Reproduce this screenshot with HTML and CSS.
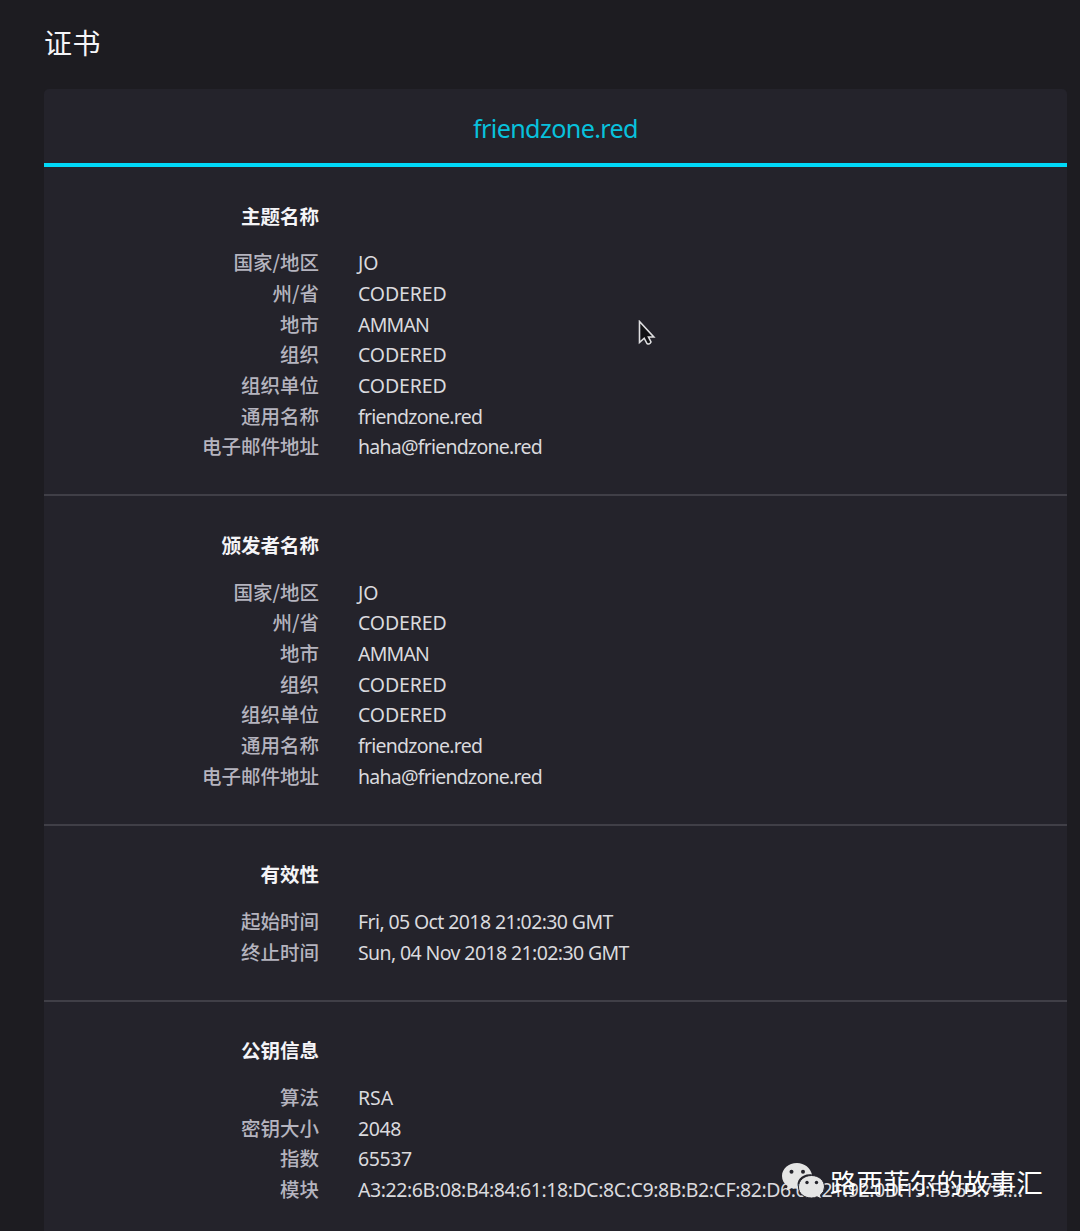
FILE: index.html
```html
<!DOCTYPE html>
<html lang="zh-CN">
<head>
<meta charset="utf-8">
<title>证书</title>
<link rel="stylesheet" href="styles.css">
</head>
<body>
<main class="page">
<h1 class="title">证书</h1>
<article class="certificate">
<div class="tab"><span>friendzone.red</span></div>
<section class="group">
<h2>主题名称</h2>
<dl>
<dt>国家/地区</dt><dd>JO</dd>
<dt>州/省</dt><dd>CODERED</dd>
<dt>地市</dt><dd class="city">AMMAN</dd>
<dt>组织</dt><dd>CODERED</dd>
<dt>组织单位</dt><dd>CODERED</dd>
<dt>通用名称</dt><dd class="lower">friendzone.red</dd>
<dt>电子邮件地址</dt><dd class="lower">haha@friendzone.red</dd>
</dl>
</section>
<section class="group">
<h2>颁发者名称</h2>
<dl>
<dt>国家/地区</dt><dd>JO</dd>
<dt>州/省</dt><dd>CODERED</dd>
<dt>地市</dt><dd class="city">AMMAN</dd>
<dt>组织</dt><dd>CODERED</dd>
<dt>组织单位</dt><dd>CODERED</dd>
<dt>通用名称</dt><dd class="lower">friendzone.red</dd>
<dt>电子邮件地址</dt><dd class="lower">haha@friendzone.red</dd>
</dl>
</section>
<section class="group">
<h2>有效性</h2>
<dl>
<dt>起始时间</dt><dd class="date">Fri, 05 Oct 2018 21:02:30 GMT</dd>
<dt>终止时间</dt><dd class="date">Sun, 04 Nov 2018 21:02:30 GMT</dd>
</dl>
</section>
<section class="group">
<h2>公钥信息</h2>
<dl>
<dt>算法</dt><dd>RSA</dd>
<dt>密钥大小</dt><dd class="number">2048</dd>
<dt>指数</dt><dd class="number">65537</dd>
<dt>模块</dt><dd class="hex">A3:22:6B:08:B4:84:61:18:DC:8C:C9:8B:B2:CF:82:D6:6E:21:92:0D:19:F3:69:79:…</dd>
</dl>
</section>
</article>
</main>
<svg class="cursor" width="18" height="27" viewBox="0 0 18 27"><path d="M1.5 1.5V22.5L6.2 18.2L9 23.5Q11.5 25 13 22L10.5 17H15.8Z" fill="#111114" stroke="#dedee0" stroke-width="1.6"/></svg>
<div class="watermark">
<svg width="44" height="38" viewBox="0 0 44 38">
<path d="M16 1C7.500 1 1 6.800 1 14C1 18.200 3 21.500 6.500 24L5.500 28.500L11 26Q14 27 17.300 26.700C14 18 22 11 31 12.500C29.500 6 23.500 1 16 1Z" fill="#e5e5e5"/>
<path d="M30.500 13.500C23 13.500 17.500 18.500 17.500 25S23 36 30.500 36Q33.500 36 36 34.800L40.500 37L39.500 33Q43.500 29.800 43.500 25C43.500 18.500 38 13.500 30.500 13.500Z" fill="#e5e5e5" stroke="#24232b" stroke-width="1"/>
<g fill="#24232b"><circle cx="10.500" cy="9.800" r="2"/><circle cx="22" cy="9.800" r="2"/><circle cx="26" cy="20.500" r="1.700"/><circle cx="35.500" cy="20.500" r="1.700"/></g>
</svg>
<span>路西菲尔的故事汇</span>
</div>
</body>
</html>
```
FILE: styles.css
```css
* { box-sizing: border-box; }
html, body { height: 1231px; overflow: hidden; }
body {
  margin: 0;
  position: relative;
  background: #1d1c21;
  color: #dadade;
  font: 19.5px/30.7px "Noto Sans", "Noto Sans CJK SC", sans-serif;
}
.page { padding: 21px 13px 0 44px; }
.title {
  margin: 0;
  height: 68px;
  color: #f5f5f8;
  font: 400 28px/42px "Noto Sans CJK SC", sans-serif;
  letter-spacing: 0.5px;
}
.certificate {
  height: 1200px;
  background: #24232b;
  border-radius: 5px 5px 0 0;
}
.tab {
  height: 78px;
  border-bottom: 4px solid #00d9f8;
  color: #08c1dc;
  font-size: 25.2px;
  line-height: 79px;
  text-align: center;
  letter-spacing: -0.65px;
}
.group {
  padding: 33.6px 0 32.3px;
  border-bottom: 2px solid #403f47;
}
.group h2 {
  width: 275px;
  margin: 0 0 16px;
  text-align: right;
  color: #f4f4f7;
  font: 700 19.5px/30.7px "Noto Sans CJK SC", sans-serif;
}
dl {
  display: grid;
  grid-template-columns: 275px 1fr;
  column-gap: 39px;
  grid-auto-rows: 30.7px;
  margin: 0;
}
dt {
  text-align: right;
  color: #b5b4bf;
  font-family: "Noto Sans CJK SC", sans-serif;
  font-weight: 500;
}
dd { margin: 0; padding-top: 1px; white-space: nowrap; letter-spacing: -0.1px; }
.city { letter-spacing: -0.8px; }
.lower { letter-spacing: -0.75px; }
.date { letter-spacing: -0.61px; }
.number { letter-spacing: -0.4px; }
.hex { letter-spacing: -0.42px; }
.cursor { position: absolute; left: 638px; top: 320px; }
.watermark {
  position: absolute;
  left: 781px;
  top: 1162px;
  display: flex;
  gap: 5px;
  color: #fff;
  font: 400 26.6px/39px "Noto Sans CJK SC", sans-serif;
  white-space: nowrap;
}
```
